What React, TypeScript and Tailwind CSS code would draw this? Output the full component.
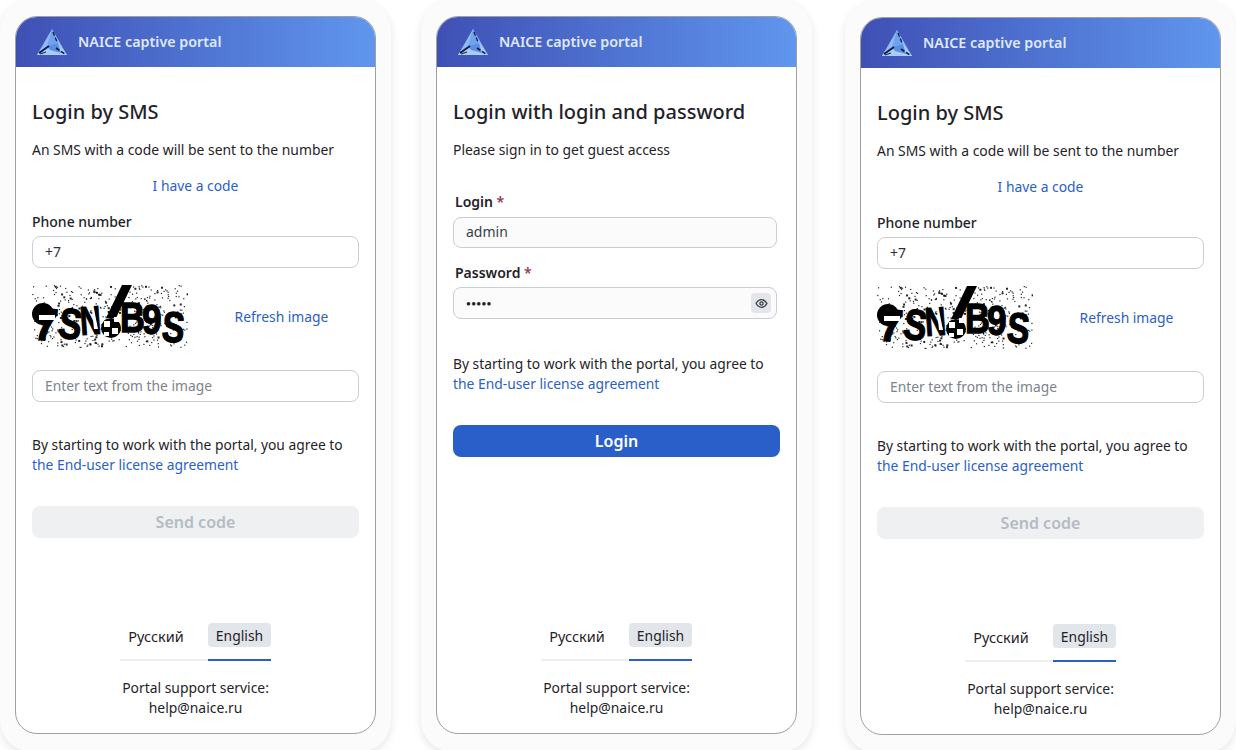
const FONT = "font-['Noto_Sans','Open_Sans',sans-serif]";

function Logo() {
  return (
    <svg width="32" height="28" viewBox="0 0 32 28" className="shrink-0">
      <polygon points="16,1 31,27 1,27" fill="#8fbcf5" />
      <polygon points="16,1 22,15 11,18" fill="#6fa3ee" />
      <polygon points="4,22 22,15 31,27 1,27" fill="#a9cdf8" />
      <polygon points="11,18 22,15 25,25 14,22" fill="#5b8fe6" />
      <path d="M17 4 L21 14" stroke="#14204f" strokeWidth="1.4" strokeDasharray="4 2" />
      <path d="M3 25 L13 18" stroke="#10193f" strokeWidth="2" />
      <path d="M20 20 L29 26" stroke="#10193f" strokeWidth="1.6" strokeDasharray="4 2" />
      <path d="M4 26 L10 24" stroke="#1c2b66" strokeWidth="1.2" />
    </svg>
  );
}

function seededDots() {
  const dots: { x: number; y: number; s: number }[] = [];
  let seed = 7351;
  const next = () => {
    seed = (seed * 16807) % 2147483647;
    return seed / 2147483647;
  };
  for (let i = 0; i < 420; i++) {
    dots.push({ x: next() * 155, y: next() * 62, s: next() > 0.85 ? 2 : 1.2 });
  }
  return dots;
}

const DOTS = seededDots();

const CAPTCHA_CHARS = [
  { c: "7", x: 1, y: 54, r: 6, s: 46, sx: 0.9 },
  { c: "S", x: 25, y: 52, r: 8, s: 43, sx: 0.8 },
  { c: "N", x: 49, y: 50, r: -4, s: 40, sx: 0.72 },
  { c: "B", x: 88, y: 47, r: 0, s: 42, sx: 0.82 },
  { c: "9", x: 110, y: 49, r: 0, s: 43, sx: 0.82 },
  { c: "S", x: 129, y: 56, r: 5, s: 43, sx: 0.78 },
];

function Captcha() {
  return (
    <svg width="156" height="63" viewBox="0 0 156 63" className="shrink-0 bg-white">
      {DOTS.map((d, i) => (
        <rect key={i} x={d.x} y={d.y} width={d.s} height={d.s} fill="#000" opacity="0.85" />
      ))}
      <ellipse cx="11" cy="29" rx="11" ry="11" fill="#000" />
      {CAPTCHA_CHARS.map((ch, i) => (
        <text
          key={i}
          transform={`translate(${ch.x} ${ch.y}) rotate(${ch.r}) scale(${ch.sx} 1)`}
          fontFamily="'Liberation Sans', sans-serif"
          fontWeight="700"
          fontSize={ch.s}
          fill="#000"
          stroke="#000"
          strokeWidth="1.3"
        >
          {ch.c}
        </text>
      ))}
      <rect x="7" y="30" width="16" height="5" fill="#fff" />
      <path d="M60 24 L62 24 L66 44 L62 44 Z" fill="#fff" />
      <path d="M90 0 L100 0 L84 33 L74 33 Z" fill="#000" />
      <circle cx="79" cy="43" r="10" fill="#000" />
      <rect x="72" y="36" width="6" height="6" fill="#fff" />
      <rect x="80" y="43" width="6" height="6" fill="#fff" />
      <rect x="72" y="47" width="5" height="4" fill="#fff" />
      <rect x="82" y="32" width="5" height="5" fill="#fff" />
    </svg>
  );
}

function Link({ children, className = "" }: { children: React.ReactNode; className?: string }) {
  return <span className={`text-[#2b5fc7] text-[13.85px] leading-5 ${className}`}>{children}</span>;
}

function Agreement({ className = "" }: { className?: string }) {
  return (
    <p className={`text-[13.8px] leading-5 text-[#1f2329] ${className}`}>
      By starting to work with the portal, you agree to
      <br />
      <Link>the End-user license agreement</Link>
    </p>
  );
}

function PhoneCard({ children, className = "" }: { children: React.ReactNode; className?: string }) {
  return (
    <div className={`w-[391px] h-[752px] shrink-0 rounded-[32px] bg-[#fbfbfc] shadow-[0_3px_10px_rgba(0,0,0,0.1)] pt-4 pl-[15px] ${className}`}>
      <div className="w-[361px] h-[718px] rounded-[22px] bg-white border border-[#a0a0a0] flex flex-col overflow-hidden">
        <div className="h-[51px] -mt-px shrink-0 flex items-center gap-[10px] pl-[20px] bg-gradient-to-r from-[#3f50b5] to-[#6096ee]">
          <Logo />
          <span className="text-[14.3px] font-semibold text-[#dfe8fb] pt-px">NAICE captive portal</span>
        </div>
        <div className="flex-1 flex flex-col px-4">{children}</div>
        <div className="flex flex-col items-center pb-[15px]">
          <div className="flex w-[151px] text-sm">
            <div className="w-[88px] h-[38px] border-b-2 border-[#eeeff1] text-[#1f2329] pr-4 text-center">
              <span className="block leading-6 pt-px text-[14.5px]">Русский</span>
            </div>
            <div className="w-[63px] h-[38px] border-b-2 border-[#2b5fc7] text-[#1f2329]">
              <span className="block h-6 leading-6 pt-px bg-[#e2e5ea] rounded text-center text-[13.9px]">English</span>
            </div>
          </div>
          <p className="mt-[17px] text-[13.9px] leading-5 text-center text-[#1f2329]">
            Portal support service:
            <br />
            help@naice.ru
          </p>
        </div>
      </div>
    </div>
  );
}

function SmsForm() {
  return (
    <>
      <h1 className="mt-[31px] text-xl leading-7 font-medium text-[#1f2329]">Login by SMS</h1>
      <p className="mt-[14px] text-[13.9px] leading-5 text-[#1f2329]">An SMS with a code will be sent to the number</p>
      <div className="mt-[13px] text-center h-5">
        <Link>I have a code</Link>
      </div>
      <label className="mt-[19px] text-sm leading-5 font-medium text-[#1f2329]">Phone number</label>
      <div className="mt-[4px] h-8 rounded-lg border border-[#c9cdd6] px-3 flex items-center text-sm text-[#2a2f36]">+7</div>
      <div className="mt-[17px] flex items-center">
        <Captcha />
        <div className="flex-1 text-center pl-[16px] pb-[2px]">
          <Link>Refresh image</Link>
        </div>
      </div>
      <div className="mt-[22px] h-8 pt-px rounded-lg border border-[#c9cdd6] px-3 flex items-center text-[13.8px] text-[#7d838c]">Enter text from the image</div>
      <Agreement className="mt-[33px]" />
      <div className="mt-[31px] h-8 rounded-lg bg-[#eff0f2] flex items-center justify-center text-base font-semibold text-[#b5bbc4]">Send code</div>
    </>
  );
}

function PasswordForm() {
  return (
    <>
      <h1 className="mt-[31px] text-xl leading-7 font-medium text-[#1f2329]">Login with login and password</h1>
      <p className="mt-[14px] text-[13.9px] leading-5 text-[#1f2329]">Please sign in to get guest access</p>
      <div className="w-[324px]">
        <div className="mt-[32px] pl-[2px] text-sm leading-5 font-semibold text-[#1f2329]">
          Login <span className="text-[#a3324f]">*</span>
        </div>
        <div className="mt-[5px] h-[31px] pb-px rounded-lg border border-[#c9cdd6] bg-[#fbfbfc] px-3 flex items-center text-sm text-[#3a3f47]">admin</div>
        <div className="mt-[15px] pl-[2px] text-sm leading-5 font-semibold text-[#1f2329]">
          Password <span className="text-[#a3324f]">*</span>
        </div>
        <div className="mt-[4px] h-[32px] rounded-lg border border-[#c9cdd6] bg-[#fbfbfc] pl-3 pr-[5px] flex items-center justify-between text-sm text-[#1f2329]">
          <span className="text-[8px] tracking-[0.3px]">●●●●●</span>
          <span className="w-5 h-5 rounded bg-[#e2e5ea] flex items-center justify-center">
            <svg width="13" height="13" viewBox="0 0 24 24" fill="none" stroke="#3a3f47" strokeWidth="2.4">
              <path d="M2 12s4-7 10-7 10 7 10 7-4 7-10 7-10-7-10-7z" />
              <circle cx="12" cy="12" r="3" />
            </svg>
          </span>
        </div>
      </div>
      <Agreement className="mt-[35px]" />
      <div className="mt-[31px] h-8 rounded-lg bg-[#2a5fc9] flex items-center justify-center text-base font-semibold text-white">Login</div>
    </>
  );
}

export default function App() {
  return (
    <div className={`w-[1236px] h-[750px] overflow-hidden bg-white flex items-start ${FONT}`}>
      <PhoneCard>
        <SmsForm />
      </PhoneCard>
      <PhoneCard className="ml-[30px]">
        <PasswordForm />
      </PhoneCard>
      <PhoneCard className="ml-[33px] mt-px">
        <SmsForm />
      </PhoneCard>
    </div>
  );
}
